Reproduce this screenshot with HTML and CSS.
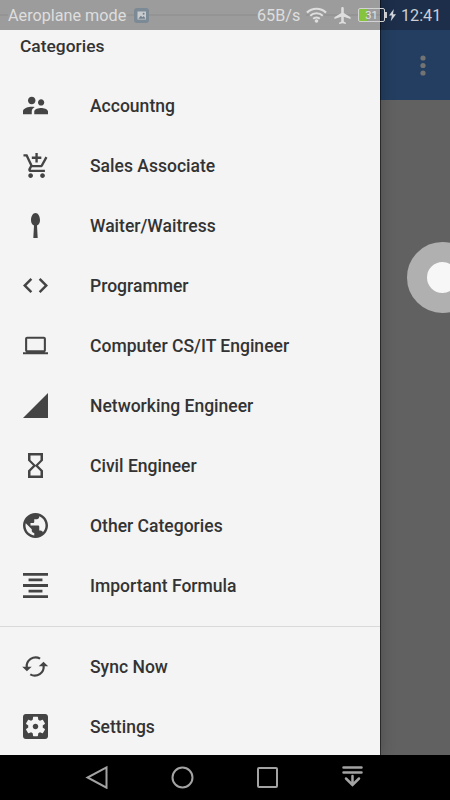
FILE: index.html
```html
<!DOCTYPE html>
<html lang="en">
<head>
<meta charset="utf-8">
<title>Categories</title>
<link rel="stylesheet" href="styles.css">
</head>
<body>
<div class="screen">
  <div class="backdrop">
    <div class="backdrop-status"></div>
    <div class="appbar">
      <svg class="more" viewBox="0 0 6 22"><circle cx="3" cy="3" r="2.6"/><circle cx="3" cy="10.5" r="2.6"/><circle cx="3" cy="18" r="2.6"/></svg>
    </div>
  </div>

  <aside class="drawer">
    <h1 class="heading">Categories</h1>
    <ul class="menu">
      <li class="item"><svg class="icon" viewBox="2 2 20 20"><path d="M16.5 12c1.38 0 2.49-1.12 2.49-2.5S17.88 7 16.5 7 14 8.12 14 9.5s1.12 2.5 2.5 2.5zM9 11c1.66 0 2.99-1.34 2.99-3S10.66 5 9 5 6 6.34 6 8s1.34 3 3 3zm7.5 3c-1.83 0-5.5.92-5.5 2.75V19h11v-2.25c0-1.83-3.67-2.75-5.5-2.75zM9 13c-2.33 0-7 1.17-7 3.5V19h7v-2.25c0-.85.33-2.34 2.37-3.47C10.5 13.1 9.66 13 9 13z"/></svg><span>Accountng</span></li>
      <li class="item"><svg class="icon" viewBox="0.6 1 21 21"><path d="M11 9h2V6h3V4h-3V1h-2v3H8v2h3v3zm-4 9c-1.1 0-1.99.9-1.99 2S5.9 22 7 22s2-.9 2-2-.9-2-2-2zm10 0c-1.1 0-1.99.9-1.99 2s.89 2 1.99 2 2-.9 2-2-.9-2-2-2zm-9.83-3.25l.03-.12.9-1.63h7.45c.75 0 1.41-.41 1.75-1.03l3.86-7.01L19.42 4h-.01l-1.1 2-2.76 5H8.53l-.13-.27L6.16 6l-.95-2-.94-2H1v2h2l3.6 7.59-1.35 2.45c-.16.28-.25.61-.25.96 0 1.1.9 2 2 2h12v-2H7.42c-.13 0-.25-.11-.25-.25z"/></svg><span>Sales Associate</span></li>
      <li class="item"><svg class="icon" viewBox="0 0 25 25"><path d="M12.5 0C15.2 0 17 3.4 17 7c0 2.8-1.1 4.8-3 5.6L14.7 25h-4.4L11 12.6C9.1 11.8 8 9.8 8 7c0-3.6 1.8-7 4.5-7z"/></svg><span>Waiter/Waitress</span></li>
      <li class="item"><svg class="icon" viewBox="2 2 20 20"><path d="M9.4 16.6L4.8 12l4.6-4.6L8 6l-6 6 6 6 1.4-1.4zm5.2 0l4.6-4.6-4.6-4.6L16 6l6 6-6 6-1.4-1.4z"/></svg><span>Programmer</span></li>
      <li class="item"><svg class="icon" viewBox="0 -0.5 24 24"><path d="M20 18c1.1 0 1.99-.9 1.99-2L22 5c0-1.1-.9-2-2-2H4c-1.1 0-2 .9-2 2v11c0 1.1.9 2 2 2H0v2h24v-2h-4zM4 5h16v11H4V5z"/></svg><span>Computer CS/IT Engineer</span></li>
      <li class="item"><svg class="icon" viewBox="2 2 20 20"><path d="M2 22h20V2z"/></svg><span>Networking Engineer</span></li>
      <li class="item"><svg class="icon" viewBox="2 2 20 20"><path d="M6 2v6h.01L6 8.01 10 12l-4 4 .01.01H6V22h12v-5.99h-.01L18 16l-4-4 4-3.99-.01-.01H18V2H6zm10 14.5V20H8v-3.5l4-4 4 4zm-4-5l-4-4V4h8v3.5l-4 4z"/></svg><span>Civil Engineer</span></li>
      <li class="item"><svg class="icon" viewBox="2 2 20 20"><path d="M12 2C6.48 2 2 6.48 2 12s4.48 10 10 10 10-4.48 10-10S17.52 2 12 2zm-1 17.93c-3.95-.49-7-3.85-7-7.93 0-.62.08-1.21.21-1.79L9 15v1c0 1.1.9 2 2 2v1.93zm6.9-2.54c-.26-.81-1-1.39-1.9-1.39h-1v-3c0-.55-.45-1-1-1H8v-2h2c.55 0 1-.45 1-1V7h2c1.1 0 2-.9 2-2v-.41c2.93 1.19 5 4.06 5 7.41 0 2.08-.8 3.97-2.1 5.39z"/></svg><span>Other Categories</span></li>
      <li class="item"><svg class="icon" viewBox="3 3 18 18"><path d="M7 15v2h10v-2H7zm-4 6h18v-2H3v2zm0-8h18v-2H3v2zm4-6v2h10V7H7zM3 3v2h18V3H3z"/></svg><span>Important Formula</span></li>
    </ul>
    <ul class="menu menu-secondary">
      <li class="item"><svg class="icon sync" viewBox="0.3 0 25 25"><path class="arc" d="M4.1 13.5A8.9 8.9 0 0 1 17.4 4.6M20.9 11.5A8.9 8.9 0 0 1 7.6 20.4"/><path d="M-.5 12.8H9L4.2 17.3zM25.5 12.2H16L20.8 7.7z"/></svg><span>Sync Now</span></li>
      <li class="item"><svg class="icon" viewBox="3 3 18 18"><path d="M12 10c-1.1 0-2 .9-2 2s.9 2 2 2 2-.9 2-2-.9-2-2-2zm7-7H5c-1.11 0-2 .9-2 2v14c0 1.1.89 2 2 2h14c1.11 0 2-.9 2-2V5c0-1.1-.89-2-2-2zm-1.75 9c0 .23-.02.46-.05.68l1.48 1.16c.13.11.17.3.08.45l-1.4 2.42c-.09.15-.27.21-.43.15l-1.74-.7c-.36.28-.76.51-1.18.69l-.26 1.85c-.03.17-.18.3-.35.3h-2.8c-.17 0-.32-.13-.35-.29l-.26-1.85c-.43-.18-.82-.41-1.18-.69l-1.74.7c-.16.06-.34 0-.43-.15l-1.4-2.42c-.09-.15-.05-.34.08-.45l1.48-1.16c-.03-.23-.05-.46-.05-.69 0-.23.02-.46.05-.68l-1.48-1.16c-.13-.11-.17-.3-.08-.45l1.4-2.42c.09-.15.27-.21.43-.15l1.74.7c.36-.28.76-.51 1.18-.69l.26-1.85c.03-.17.18-.3.35-.3h2.8c.17 0 .32.13.35.29l.26 1.85c.43.18.82.41 1.18.69l1.74-.7c.16-.06.34 0 .43.15l1.4 2.42c.09.15.05.34-.08.45l-1.48 1.16c.03.23.05.46.05.69z"/></svg><span>Settings</span></li>
    </ul>
  </aside>

  <header class="status">
    <span class="mode">Aeroplane mode</span>
    <svg class="picture" viewBox="0 0 15 15"><rect width="15" height="15" rx="3" fill="#7c8a96"/><path d="M3.5 3.5h8.5v8H3.5z" fill="#c8cbce"/><path d="M4.3 10.7l2.5-3 1.7 1.6 1.3-1.2 1.7 2.6z" fill="#71808d"/><circle cx="9.6" cy="5.8" r="1" fill="#71808d"/></svg>
    <span class="speed">65B/s</span>
    <svg class="wifi" viewBox="0 0 21 16"><path d="M1 5.6a13.6 13.6 0 0 1 19 0M4.2 8.8a9 9 0 0 1 12.6 0M7.2 11.8a4.9 4.9 0 0 1 6.6 0"/><circle cx="10.5" cy="14" r="1.8"/></svg>
    <svg class="plane" viewBox="2.5 2 19 20"><path d="M21.5 16v-2l-8-5V3.5c0-.83-.67-1.5-1.5-1.5s-1.5.67-1.5 1.5V9l-8 5v2l8-2.5V19l-2.5 1.5V22l4-1 4 1v-1.5L13.5 19v-5.5l8 2.5z"/></svg>
    <div class="battery"><span>31</span></div>
    <svg class="bolt" viewBox="0 0 8 14"><path d="M5.5 0L0 7.5h3.3L2 14l6-8H4.6z"/></svg>
    <span class="clock">12:41</span>
  </header>

  <div class="assist"></div>

  <nav class="navbar">
    <svg viewBox="-0.5 -0.5 24 24"><path d="M21 1.8v20.4L2 12z"/></svg>
    <svg viewBox="-0.5 -0.5 24 24"><circle cx="12" cy="12" r="10"/></svg>
    <svg viewBox="-0.5 -0.5 24 24"><rect x="2.5" y="2.5" width="19" height="19" rx="1"/></svg>
    <svg class="pull" viewBox="-0.5 0 24 24"><path d="M3 2.5h18M3 7.6h18M12 11v9M5.5 13.5l6.5 6.500 6.500-6.500"/></svg>
  </nav>
</div>
</body>
</html>
```

FILE: styles.css
```css
* { box-sizing: border-box; }

body {
  margin: 0;
  font-family: Roboto, "Liberation Sans", sans-serif;
}

.screen {
  position: relative;
  width: 450px;
  height: 800px;
  overflow: hidden;
  background: #616161;
}

.backdrop {
  position: absolute;
  inset: 0;
}

.backdrop-status { height: 30px; background: #1c2e4a; }

.appbar {
  display: flex;
  justify-content: flex-end;
  height: 70px;
  padding: 24.5px 24.5px 0 0;
  background: #233e60;
}

.more { width: 6px; height: 22px; fill: #737373; }

.drawer {
  position: absolute;
  top: 0;
  left: 0;
  width: 380px;
  height: 755px;
  padding-top: 30px;
  background: #f4f4f4;
  box-shadow: 1px 0 0 rgba(0, 0, 0, .5), 0 0 14px rgba(0, 0, 0, .25);
  color: #333;
}

.heading {
  height: 46px;
  margin: 0;
  padding-left: 20px;
  font-size: 17.4px;
  font-weight: 500;
  line-height: 33px;
  transform: translateY(.4px);
}

.menu { margin: 0; padding: 0; list-style: none; }

.menu-secondary {
  margin-top: 10px;
  padding-top: 10px;
  border-top: 1px solid #d9d9d9;
}

.item {
  display: flex;
  align-items: center;
  gap: 42px;
  height: 60px;
  padding-left: 23px;
  font-size: 17.55px;
  font-weight: 500;
  line-height: 60px;
  white-space: nowrap;
}

.item span { transform: translateY(.4px); }

.icon {
  flex: none;
  width: 25px;
  height: 25px;
  margin-bottom: 1px;
  fill: #444;
  overflow: visible;
}

.sync .arc { fill: none; stroke: #444; stroke-width: 2.2; }

.status {
  position: absolute;
  inset: 0 0 auto;
  display: flex;
  align-items: center;
  height: 30px;
  padding: 0 8px;
  background: linear-gradient(90deg, #9c9c9c 380px, transparent 380px);
  color: #dedede;
  font-size: 16.2px;
}

.status::before {
  content: "";
  position: absolute;
  top: 14px;
  left: 0;
  width: 380px;
  height: 2px;
  background: #949494;
}

.status > * { position: relative; flex: none; }

.mode { width: 119px; margin-right: 6.5px; background: #9c9c9c; }
.picture { width: 15px; height: 15px; }
.speed { width: 49px; margin-left: 108.5px; background: #9c9c9c; }
.wifi { width: 21px; height: 16px; fill: #dedede; }
.wifi path { fill: none; stroke: #dedede; stroke-width: 2.2; }
.plane { width: 17px; height: 17px; margin-left: 6.5px; fill: #dedede; }

.battery {
  width: 27px;
  height: 14px;
  margin-left: 7.5px;
  border: 1.5px solid #d2d2d2;
  border-radius: 2px;
  background: linear-gradient(90deg, #86c440 8px, transparent 8px);
  color: #e4e4e4;
  font-size: 11px;
  line-height: 13px;
  text-align: center;
}

.battery::after {
  content: "";
  position: absolute;
  top: 3px;
  right: -3px;
  width: 2px;
  height: 6px;
  background: #c8ccd2;
}

.bolt { width: 7px; height: 14px; margin-left: 3.5px; fill: #d0d4da; }
.clock { margin-left: 5.5px; color: #ccd0d6; }

.mode, .speed, .clock { padding-top: 1px; }

.assist {
  position: absolute;
  top: 242px;
  left: 406.5px;
  width: 71px;
  height: 71px;
  border: 20.5px solid #b0b0b0;
  border-radius: 50%;
  background: #f7f7f7;
}

.navbar {
  position: absolute;
  inset: auto 0 0;
  display: flex;
  align-items: center;
  gap: 61px;
  height: 45px;
  padding: 0 0 1px 85px;
  background: #000;
}

.navbar svg {
  width: 24px;
  height: 24px;
  fill: none;
  stroke: #a3a3a3;
  stroke-width: 2;
}

.navbar .pull { stroke-width: 2.5; stroke-linecap: round; }
```
